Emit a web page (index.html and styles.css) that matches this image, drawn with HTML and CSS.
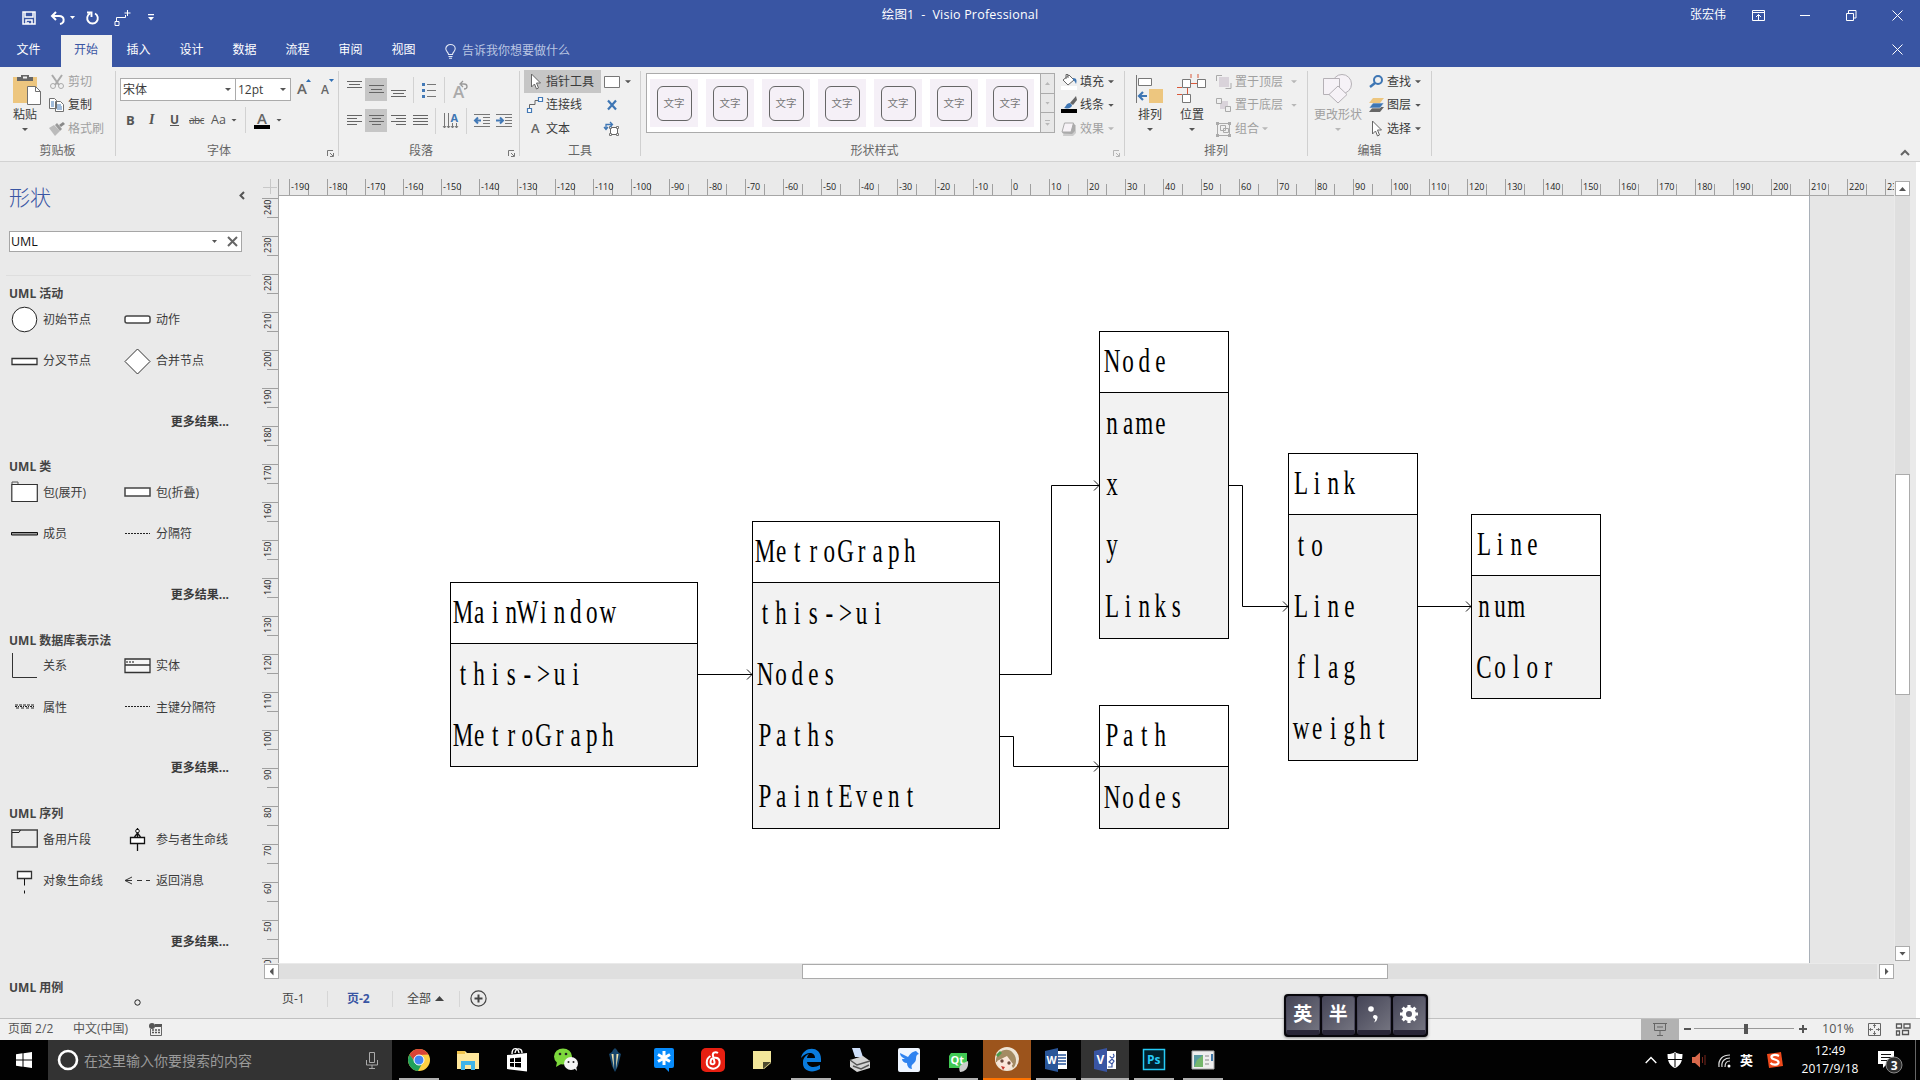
FILE: index.html
```html
<!DOCTYPE html>
<html lang="zh-CN">
<head>
<meta charset="utf-8">
<title>绘图1 - Visio Professional</title>
<link rel="stylesheet" href="styles.css">
</head>
<body>
<header class="titlebar">
  <div class="qat">
    <svg width="14" height="14" viewBox="0 0 14 14"><path d="M1 1h12v12H1zM3 1v5h8V1M4 13V9h6v4M6 11v2" fill="none" stroke="#fff" stroke-width="1.5"/></svg>
    <svg class="q-undo" width="16" height="14" viewBox="0 0 16 14"><path d="M6 1L2 5l4 4M2 5h7c6 0 6 7 1 8" fill="none" stroke="#fff" stroke-width="2"/></svg>
    <i class="caret white q-caret"></i>
    <svg class="q-redo" width="14" height="14" viewBox="0 0 14 14"><path d="M9 2.500A5.300 5.300 0 1 1 4 2.500M1 1.500h4.500V6" fill="none" stroke="#fff" stroke-width="1.900"/></svg>
    <svg class="q-conn" width="17" height="16" viewBox="0 0 17 16"><path d="M2.500 11V7.500H9.500M1 11.500h4v4H1zM13.500 0v6M10.500 3h6M11.500 5v2.500H8" fill="none" stroke="#fff"/></svg>
    <svg class="q-more" width="6" height="7" viewBox="0 0 6 7"><path d="M0 0h6v1.300H0zM0 3h6L3 6.500z" fill="#fff"/></svg>
  </div>
  <div class="doc-title">绘图1&nbsp; -&nbsp; Visio Professional</div>
  <div class="win">
    <span>张宏伟</span>
    <svg class="w-opt" width="13" height="11" viewBox="0 0 13 11"><path d="M.5.500h12v10H.5zM.5 2.500h12M6.500 10V4.500M4 7l2.500-2.500L9 7" fill="none" stroke="#fff"/></svg>
    <svg class="w-min" width="10" height="11" viewBox="0 0 10 11"><path d="M0 5.500h10" stroke="#fff"/></svg>
    <svg class="w-max" width="11" height="11" viewBox="0 0 11 11"><path d="M.5 3.500h7v7h-7zM2.500 3V.500h7.500v7.500H8" fill="none" stroke="#fff"/></svg>
    <svg class="w-x" width="11" height="11" viewBox="0 0 11 11"><path d="M.5.500l10 10M10.500.500l-10 10" stroke="#fff"/></svg>
  </div>
</header>
<nav class="tabs">
  <span class="file">文件</span><span class="active">开始</span><span>插入</span><span>设计</span><span>数据</span><span>流程</span><span>审阅</span><span>视图</span>
  <svg class="bulb" width="11" height="15" viewBox="0 0 11 15"><path d="M3.500 10.500C3.500 8 .8 7.500.8 4.800a4.700 4.300 0 0 1 9.400 0C10.200 7.500 7.500 8 7.500 10.500zM3.500 12.500h4M4 14.300h3" fill="none" stroke="#e4e9f5" stroke-width="1.100"/></svg>
  <em>告诉我你想要做什么</em>
  <svg class="tab-x" width="11" height="11" viewBox="0 0 11 11"><path d="M.5.500l10 10M10.500.500l-10 10" stroke="#fff"/></svg>
</nav>

<section class="ribbon">
  <div class="group g-clip">
    <div class="body">
      <div class="big paste">
        <svg width="30" height="32" viewBox="0 0 30 32"><path d="M1 3h24v26H1z" fill="#edc67f"/><path d="M5 3h4V1h8v2h4v4H5z" fill="#666"/><path d="M11 2.500h4v2h-4z" fill="#f0f0f0"/><path d="M15.500 12.500h8l5 5v13h-13z" fill="#fff" stroke="#707070"/><path d="M23.500 12.500v5h5" fill="none" stroke="#707070"/></svg>
        <span>粘贴</span><i class="caret"></i>
      </div>
      <div class="rows">
        <div class="row off"><svg width="16" height="16" viewBox="0 0 16 16"><path d="M3 1l7 10M13 1L6 11" stroke="#aaa" stroke-width="2"/><circle cx="4" cy="12" r="2.500" fill="none" stroke="#aaa"/><circle cx="12" cy="12" r="2.500" fill="none" stroke="#aaa"/></svg><span>剪切</span></div>
        <div class="row"><svg width="16" height="16" viewBox="0 0 16 16"><path d="M.5 1.500h5l2 2v8h-7zM6.500 4.500h5l3 3v7h-8z" fill="#fff" stroke="#707070"/><path d="M2 5h3M2 7h3M2 9h3M8 8h4M8 10h5M8 12h5" stroke="#4379b6"/></svg><span>复制</span></div>
        <div class="row off"><svg width="16" height="16" viewBox="0 0 16 16"><path d="M0 7l5-3 6 6-5 5z" fill="#bbb"/><path d="M6 4l2-2 5 6-2 2z" fill="#999"/><path d="M10 4l4-3 2 2-4 3z" fill="#888"/></svg><span>格式刷</span></div>
      </div>
    </div>
    <div class="caption"><span>剪贴板</span></div>
  </div>
  <i class="vsep"></i>
  <div class="group g-font">
    <div class="body col">
      <div class="line1">
        <div class="combo name"><span>宋体</span><i class="caret"></i></div><div class="combo size"><span>12pt</span><i class="caret"></i></div>
        <svg class="grow" width="14" height="18" viewBox="0 0 14 18"><path d="M9 3h5l-2.500-3z" fill="#2f6fb5"/><text x="0" y="15" class="ia" font-size="15">A</text></svg>
        <svg class="shrink" width="14" height="18" viewBox="0 0 14 18"><path d="M8 0h5l-2.500 3z" fill="#2f6fb5"/><text x="0" y="15" class="ia" font-size="12">A</text></svg>
      </div>
      <div class="line2">
        <b class="fb">B</b><b class="fi">I</b><b class="fu">U</b><s class="fs">abc</s><span class="fa">Aa</span><i class="caret"></i><i class="tiny-sep"></i>
        <svg class="fcolor" width="16" height="17" viewBox="0 0 16 17"><text x="3" y="12" class="ia" font-size="15">A</text><path d="M0 13h16v4H0z" fill="#000"/></svg><i class="caret"></i>
      </div>
    </div>
    <div class="caption launch"><span>字体</span><svg width="7" height="7" viewBox="0 0 7 7"><path d="M.5 6V.500H6M3 3l3 3M6.500 3v3.500H3" fill="none" stroke="#777"/></svg></div>
  </div>
  <i class="vsep"></i>
  <div class="group g-para">
    <div class="body col">
      <div class="pline">
        <span class="pb"><svg width="15" height="23" viewBox="0 0 15 23"><path d="M0 3.500h15M2 6.500h11M0 9.500h15" stroke="#666"/></svg></span>
        <span class="pb on"><svg width="15" height="23" viewBox="0 0 15 23"><path d="M0 7.500h15M2 11.500h11M0 14.500h15" stroke="#666"/></svg></span>
        <span class="pb"><svg width="15" height="23" viewBox="0 0 15 23"><path d="M0 12.500h15M2 15.500h11M0 18.500h15" stroke="#666"/></svg></span>
        <i class="tiny-sep m1"></i>
        <svg class="bul" width="16" height="16" viewBox="0 0 16 16"><path d="M5 2.500h9M5 8.500h9M5 14.500h9" stroke="#777"/><path d="M0 1h3v3H0zM0 7h3v3H0zM0 13h3v3H0z" fill="#4379b6"/></svg>
        <i class="tiny-sep m2"></i>
        <svg class="rot" width="16" height="18" viewBox="0 0 16 18"><text x="0" y="17" class="ia g" font-size="17">A</text><path d="M8 3h3c4 0 4 5 0 5M10 0L7 3l3 3" fill="none" stroke="#999" stroke-width="1.300"/></svg>
      </div>
      <div class="pline second">
        <span class="pb"><svg width="15" height="23" viewBox="0 0 15 23"><path d="M0 6.500h15M0 9.500h10M0 12.500h15M0 15.500h10" stroke="#666"/></svg></span>
        <span class="pb on"><svg width="15" height="23" viewBox="0 0 15 23"><path d="M0 6.500h15M3 9.500h9M0 12.500h15M3 15.500h9" stroke="#666"/></svg></span>
        <span class="pb"><svg width="15" height="23" viewBox="0 0 15 23"><path d="M0 6.500h15M5 9.500h10M0 12.500h15M5 15.500h10" stroke="#666"/></svg></span>
        <span class="pb"><svg width="15" height="23" viewBox="0 0 15 23"><path d="M0 6.500h15M0 9.500h15M0 12.500h15M0 15.500h15" stroke="#666"/></svg></span>
        <i class="tiny-sep"></i>
        <svg class="vert" width="17" height="16" viewBox="0 0 17 16"><path d="M1.500 0v15M5.500 0v15M9.500 10v5M13.500 10v5M0 13l1.500 2L3 13M4 13l1.500 2L7 13M8 13l1.500 2 1.500-2M12 13l1.500 2 1.500-2" fill="none" stroke="#777"/><text x="7.500" y="9" class="ia blue" font-size="11">A</text></svg>
        <i class="tiny-sep m3"></i>
        <svg class="ind" width="16" height="13" viewBox="0 0 16 13"><path d="M0 .5h16M9 3.500h7M9 6.500h7M9 9.500h7M0 12.500h16" stroke="#777"/><path d="M7 6.500H1M4 3.500l-3 3 3 3" fill="none" stroke="#4379b6" stroke-width="2"/></svg>
        <svg class="ind" width="16" height="13" viewBox="0 0 16 13"><path d="M0 .5h16M9 3.500h7M9 6.500h7M9 9.500h7M0 12.500h16" stroke="#777"/><path d="M0 6.500h6M4 3.500l3 3-3 3" fill="none" stroke="#4379b6" stroke-width="2"/></svg>
      </div>
    </div>
    <div class="caption launch"><span>段落</span><svg width="7" height="7" viewBox="0 0 7 7"><path d="M.5 6V.500H6M3 3l3 3M6.500 3v3.500H3" fill="none" stroke="#777"/></svg></div>
  </div>
  <i class="vsep"></i>
  <div class="group g-tools">
    <div class="body">
      <div class="rows tools">
        <div class="row sel"><svg width="16" height="18" viewBox="0 0 16 18"><path d="M4.500 1v13l3-3 2 5 2-1-2-5h4z" fill="#fff" stroke="#666"/></svg><span>指针工具</span></div>
        <div class="row"><svg width="16" height="18" viewBox="0 0 16 18"><path d="M2.500 12V8.500h5.500V4.500h3" fill="none" stroke="#666"/><path d="M.5 12.500h4v4h-4zM11.500 1.500h4v4h-4z" fill="#fff" stroke="#4379b6" stroke-width="1.200"/></svg><span>连接线</span></div>
        <div class="row"><svg width="16" height="18" viewBox="0 0 16 18"><text x="4" y="13" class="ia" font-size="13">A</text></svg><span>文本</span></div>
      </div>
      <div class="rows minis">
        <div class="row"><svg width="17" height="14" viewBox="0 0 17 14"><path d="M.5 1.500h15v11H.5z" fill="#fff" stroke="#777"/></svg><i class="caret"></i></div>
        <div class="row"><svg width="17" height="12" viewBox="0 0 17 12"><path d="M4 1.500l8 9M12 1.500l-8 9" stroke="#3e76b4" stroke-width="2.200"/></svg></div>
        <div class="row"><svg width="17" height="16" viewBox="0 0 17 16"><path d="M6.500 6.500h7v7h-7z" fill="#fff" stroke="#666"/><path d="M5.500 5.500h2v2h-2zM12.500 5.500h2v2h-2zM5.500 12.500h2v2h-2zM12.500 12.500h2v2h-2z" fill="#fff" stroke="#777"/><path d="M2 8V3.500h6M0 6l2 2.500L4 6M6 1l2.500 2.500L6 6" fill="none" stroke="#3e76b4" stroke-width="1.300"/></svg></div>
      </div>
    </div>
    <div class="caption"><span>工具</span></div>
  </div>
  <i class="vsep"></i>
  <div class="group g-style">
    <div class="body">
      <div class="gallery">
        <div class="cells"><span class="cell"><u>文字</u></span><span class="cell"><u>文字</u></span><span class="cell"><u>文字</u></span><span class="cell"><u>文字</u></span><span class="cell"><u>文字</u></span><span class="cell"><u>文字</u></span><span class="cell"><u>文字</u></span></div>
        <div class="gscroll"><span><i class="caret up pale"></i></span><span><i class="caret pale"></i></span><span class="more"><i class="caret pale"></i></span></div>
      </div>
      <div class="rows fills">
        <div class="row"><svg width="16" height="18" viewBox="0 0 16 18"><path d="M2 7l6-5 5 5-6 5z" fill="#fff" stroke="#666"/><path d="M5 6V1.500h2V5" fill="none" stroke="#666"/><path d="M12 5c4 0 4 3 3 6-1-2-1-3-3-4z" fill="#3e76b4"/><path d="M0 13h16v4H0z" fill="#fff"/></svg><span>填充</span><i class="caret"></i></div>
        <div class="row"><svg width="16" height="18" viewBox="0 0 16 18"><path d="M3 12c2-1 2-5 6-5l2 2c0 3-4 4-8 3z" fill="#3e76b4"/><path d="M9 7l6-7 1 4-4 5z" fill="#666"/><path d="M0 13h16v4H0z" fill="#000"/></svg><span>线条</span><i class="caret"></i></div>
        <div class="row off"><svg width="16" height="18" viewBox="0 0 16 18"><path d="M4 5h11v8l-3 3H2z" fill="#ccc"/><path d="M3.500 3h9L10 12H1z" fill="#f6f2f6" stroke="#aaa"/><path d="M12.500 3l1.500 2v6l-3 3-9-.500L1 12h9z" fill="#aaa"/></svg><span>效果</span><i class="caret pale"></i></div>
      </div>
    </div>
    <div class="caption launch"><span>形状样式</span><svg width="7" height="7" viewBox="0 0 7 7"><path d="M.5 6V.500H6M3 3l3 3M6.500 3v3.500H3" fill="none" stroke="#b5b5b5"/></svg></div>
  </div>
  <i class="vsep"></i>
  <div class="group g-arr">
    <div class="body">
      <div class="big b1">
        <svg width="30" height="31" viewBox="0 0 30 31"><path d="M1.500 1v28" stroke="#777"/><path d="M3.500 4.500h13v7h-13z" fill="#fff" stroke="#777"/><path d="M14 15h14v14H14z" fill="#edc67f"/><path d="M12 22H5M8 18l-4 4 4 4" fill="none" stroke="#3e76b4" stroke-width="2.200"/></svg>
        <span>排列</span><i class="caret"></i>
      </div>
      <div class="big b2">
        <svg width="30" height="31" viewBox="0 0 30 31"><path d="M14 0v4M21 0v4M14 9.500h8M10.500 14v7M0 13.500h5M0 20.500h5" stroke="#d9593b"/><path d="M5.500 5.500h8v8h-8zM20.500 5.500h8v8h-8zM5.500 20.500h8v8h-8z" fill="#fff" stroke="#777"/></svg>
        <span>位置</span><i class="caret"></i>
      </div>
      <div class="rows arr">
        <div class="row off"><svg width="16" height="16" viewBox="0 0 16 16"><path d="M3 3h10v10H3z" fill="#d9d3da"/><path d="M6 1.500H.5V7M15 9v5.500H9.500" fill="none" stroke="#aaa"/></svg><span>置于顶层</span><i class="caret pale"></i></div>
        <div class="row off"><svg width="16" height="16" viewBox="0 0 16 16"><path d="M4 4h8v8H4z" fill="#d9d3da"/><path d="M.5 1.500h5v5h-5zM9.500 9.500h5v5h-5z" fill="#f0f0f0" stroke="#aaa"/></svg><span>置于底层</span><i class="caret pale"></i></div>
        <div class="row off near"><svg width="16" height="16" viewBox="0 0 16 16"><path d="M1.500 2.500h12v12h-12zM4.500 4.500h5v5h-5zM7.500 7.500h5v4h-5z" fill="none" stroke="#aaa"/><path d="M0 1h3v3H0zM12 1h3v3h-3zM0 13h3v3H0zM12 13h3v3h-3z" fill="#aaa"/></svg><span>组合</span><i class="caret pale"></i></div>
      </div>
    </div>
    <div class="caption"><span>排列</span></div>
  </div>
  <i class="vsep"></i>
  <div class="group g-edit">
    <div class="body">
      <div class="big off change">
        <svg width="30" height="31" viewBox="0 0 30 31"><circle cx="19" cy="10" r="9.500" fill="#f6f2f7" stroke="#b5b1b6"/><path d="M.5 4.500h16v16H.500z" fill="#f6f2f7" stroke="#b5b1b6"/><path d="M15 12l9 8.500-9 8.500-9-8.500z" fill="#f6f2f7" stroke="#b5b1b6"/></svg>
        <span>更改形状</span><i class="caret pale"></i>
      </div>
      <div class="rows edit">
        <div class="row"><svg width="15" height="16" viewBox="0 0 15 16"><circle cx="9" cy="6" r="4" fill="none" stroke="#3e76b4" stroke-width="2"/><path d="M6 9l-5 4" stroke="#3e76b4" stroke-width="2.500"/></svg><span>查找</span><i class="caret"></i></div>
        <div class="row"><svg width="15" height="16" viewBox="0 0 15 16"><path d="M4 10h11l-4 5H0z" fill="#666"/><path d="M4 6h11l-4 5H0z" fill="#3e76b4" stroke="#f0f0f0" stroke-width=".6"/><path d="M4 1h11l-4 5H0z" fill="#edc67f"/></svg><span>图层</span><i class="caret"></i></div>
        <div class="row"><svg width="15" height="18" viewBox="0 0 15 18"><path d="M3.500 1v13l3-3 2 5 2-1-2-5h4z" fill="#fff" stroke="#666"/></svg><span>选择</span><i class="caret"></i></div>
      </div>
    </div>
    <div class="caption"><span>编辑</span></div>
  </div>
  <i class="vsep"></i>
  <svg class="collapse" width="10" height="7" viewBox="0 0 10 7"><path d="M1 6l4-4 4 4" fill="none" stroke="#666" stroke-width="2"/></svg>
</section>

<main class="work">
  <aside class="shapes">
    <div class="shapes-head"><h1>形状</h1><svg width="6" height="9" viewBox="0 0 6 9"><path d="M5 1L1.500 4.500 5 8" fill="none" stroke="#555" stroke-width="2"/></svg></div>
    <div class="search"><span>UML</span><i class="caret"></i><svg width="11" height="11" viewBox="0 0 11 11"><path d="M1 1l9 9M10 1l-9 9" stroke="#666" stroke-width="2"/></svg></div>
    <div class="stencils">
      <section class="stencil"><h2>UML 活动</h2>
        <div class="grid">
          <div><svg viewBox="0 0 27 27"><circle cx="13.500" cy="13.500" r="12.300" fill="#fff" stroke="#222"/></svg>初始节点</div>
          <div><svg viewBox="0 0 27 27"><rect x="1" y="10" width="25" height="7" rx="2" fill="#fff" stroke="#444" stroke-width="1.500"/></svg>动作</div>
          <div><svg viewBox="0 0 27 27"><path d="M1 10.500h25v6H1z" fill="#fff" stroke="#333" stroke-width="1.300"/></svg>分叉节点</div>
          <div><svg viewBox="0 0 27 27"><path d="M13.500 1L26 13.500 13.500 26 1 13.500z" fill="#fff" stroke="#333"/></svg>合并节点</div>
        </div><b>更多结果...</b></section>
      <section class="stencil"><h2>UML 类</h2>
        <div class="grid">
          <div><svg viewBox="0 0 27 27"><path d="M1 5.500V3h6v2.500" fill="none" stroke="#555"/><path d="M.8 5.500h25.500v17H.8z" fill="#fff" stroke="#333" stroke-width="1.200"/></svg>包(展开)</div>
          <div><svg viewBox="0 0 27 27"><path d="M1 9h25v8H1z" fill="#fff" stroke="#444" stroke-width="1.500"/></svg>包(折叠)</div>
          <div><svg viewBox="0 0 27 27"><path d="M.5 11.500h26v2.500H.5z" fill="#999" stroke="#111"/></svg>成员</div>
          <div><svg viewBox="0 0 27 27"><path d="M1 12.500h25" stroke="#222" stroke-dasharray="2 1"/></svg>分隔符</div>
        </div><b>更多结果...</b></section>
      <section class="stencil"><h2>UML 数据库表示法</h2>
        <div class="grid">
          <div><svg viewBox="0 0 27 27"><path d="M1.500 0v24.500H26" fill="none" stroke="#333"/></svg>关系</div>
          <div><svg viewBox="0 0 27 27"><path d="M1 6h25v13.500H1zM1 12h25" fill="#f6f6f6" stroke="#333" stroke-width="1.300"/><path d="M2 9h9" stroke="#111" stroke-dasharray="2 1"/></svg>实体</div>
          <div><svg viewBox="0 0 27 27"><path d="M4 11h19" stroke="#222" stroke-dasharray="3 1"/><path d="M4 12.500h19" stroke="#222" stroke-dasharray="2 1 1 1"/><path d="M5 14h18" stroke="#222" stroke-dasharray="3 2"/></svg>属性</div>
          <div><svg viewBox="0 0 27 27"><path d="M1 12.500h25" stroke="#222" stroke-dasharray="2 1"/></svg>主键分隔符</div>
        </div><b>更多结果...</b></section>
      <section class="stencil"><h2>UML 序列</h2>
        <div class="grid">
          <div><svg viewBox="0 0 27 27"><path d="M.8 4h25.500v17H.8z" fill="#ebebeb" stroke="#444" stroke-width="1.400"/><path d="M1 6.500h7l1.500-2.500" fill="none" stroke="#222"/></svg>备用片段</div>
          <div><svg viewBox="0 0 27 27"><circle cx="13.500" cy="5" r="1.800" fill="#fff" stroke="#111"/><path d="M13.500 2v2M13.500 7v5M10.500 11l3-4 3 4M13.500 18v7" fill="none" stroke="#111" stroke-width="1.300"/><path d="M6.500 11.500h14v6h-14z" fill="#fff" stroke="#111" stroke-width="1.300"/></svg>参与者生命线</div>
          <div><svg viewBox="0 0 27 27"><path d="M6.500 3.500h14v7h-14z" fill="#fff" stroke="#333" stroke-width="1.300"/><path d="M13.500 11v6.500M13.500 22.500v3" stroke="#111"/></svg>对象生命线</div>
          <div><svg viewBox="0 0 27 27"><path d="M8 9l-7 3.500L8 16M1 12.500h7M13 12.500h5M22 12.500h4" fill="none" stroke="#333"/></svg>返回消息</div>
        </div><b>更多结果...</b></section>
      <section class="stencil last"><h2>UML 用例</h2><svg width="7" height="7" viewBox="0 0 7 7"><circle cx="3.500" cy="3.500" r="2.700" fill="none" stroke="#222"/></svg></section>
    </div>
  </aside>

  <div class="editor">
    <div class="corner"></div>
    <div class="hruler" id="hruler"></div>
    <div class="vruler" id="vruler"></div>
    <div class="canvas">
      <div class="offpage"></div>
      <div class="cls mainwindow"><h3><svg><text>MainWindow</text></svg></h3><p><svg><text>this-&gt;ui</text></svg></p><p><svg><text>MetroGraph</text></svg></p></div>
      <div class="cls metrograph"><h3><svg><text>MetroGraph</text></svg></h3><p><svg><text>this-&gt;ui</text></svg></p><p><svg><text>Nodes</text></svg></p><p><svg><text>Paths</text></svg></p><p><svg><text>PaintEvent</text></svg></p></div>
      <div class="cls node"><h3><svg><text>Node</text></svg></h3><p><svg><text>name</text></svg></p><p><svg><text>x</text></svg></p><p><svg><text>y</text></svg></p><p><svg><text>Links</text></svg></p></div>
      <div class="cls link"><h3><svg><text>Link</text></svg></h3><p><svg><text>to</text></svg></p><p><svg><text>Line</text></svg></p><p><svg><text>flag</text></svg></p><p><svg><text>weight</text></svg></p></div>
      <div class="cls lineb"><h3><svg><text>Line</text></svg></h3><p><svg><text>num</text></svg></p><p><svg><text>Color</text></svg></p></div>
      <div class="cls path"><h3><svg><text>Path</text></svg></h3><p><svg><text>Nodes</text></svg></p></div>
      <svg class="wires" width="1615" height="767" viewBox="279 196 1615 767"><g fill="none" stroke="#000"><path d="M698 674.500h55M1000 674.500h51.500v-189h48M1000 736.500h13.500v30h86M1229 485.500h13.500v121h46M1418 606.500h54"/><path stroke-width=".9" d="M747 669.500l5 5-5 5M1094 480.500l5 5-5 5M1094 761.500l5 5-5 5M1283 601.500l5 5-5 5M1466 601.500l5 5-5 5"/></g></svg>
    </div>
    <div class="vscroll"><span class="sb"><i class="caret up"></i></span><div class="vtrack"><div class="vthumb"></div></div><span class="sb"><i class="caret"></i></span></div>
    <div class="hscroll"><span class="sb"><i class="tri left"></i></span><div class="htrack"><div class="hthumb"></div></div><span class="sb"><i class="tri right"></i></span></div>
    <div class="pages"><span class="p1">页-1</span><i></i><b class="p2">页-2</b><i></i><span class="p3">全部</span><em></em><i></i>
      <svg width="17" height="17" viewBox="0 0 17 17"><circle cx="8.500" cy="8.500" r="7.600" fill="none" stroke="#444" stroke-width="1.200"/><path d="M8.500 4.500v8M4.500 8.500h8" stroke="#444" stroke-width="2"/></svg></div>
  </div>
  <div class="edge"></div>
</main>

<footer class="status">
  <span class="s1">页面 2/2</span><span class="s2">中文(中国)</span>
  <svg class="rec" width="14" height="13" viewBox="0 0 14 13"><path d="M6 1h7v3H6z" fill="#555"/><circle cx="3" cy="3" r="3" fill="#555"/><path d="M1.500 6v6.500h11V3" fill="none" stroke="#666"/><path d="M3 7h8M3 9.500h8" stroke="#555" stroke-dasharray="2 1" stroke-width="1.500"/></svg>
  <div class="present"><svg width="14" height="13" viewBox="0 0 14 13"><path d="M0 .5h14M1.500 1v6.500h11V1M4 4h6M7 8v4M4 12.500h6" fill="none" stroke="#666"/></svg></div>
  <svg class="zoombar" width="123" height="12" viewBox="0 0 123 12"><path d="M0 6h7M115 6h8M119 2v8" stroke="#555" stroke-width="2"/><path d="M10 5.500h100" stroke="#999"/><path d="M60 1h4v10h-4z" fill="#555"/></svg>
  <span class="pct">101%</span>
  <svg class="fit" width="13" height="13" viewBox="0 0 13 13"><path d="M.5.500h12v12H.5z" fill="none" stroke="#666"/><path d="M6.500 1v4M6.500 8v4M1 6.500h4M8 6.500h4M5 2.500h3M5 10.500h3M2.500 5v3M10.500 5v3" stroke="#666" stroke-width=".9"/></svg>
  <svg class="multi" width="15" height="13" viewBox="0 0 15 13"><path d="M.5 1h5v4h-5zM8 1h6v4H8zM.5 8h3v4h-3zM6.500 7.500h6v4h-6z" fill="none" stroke="#555" stroke-width="1.300"/></svg>
</footer>

<footer class="taskbar">
  <div class="start"><svg width="16" height="16" viewBox="0 0 16 16"><path d="M0 2.300L6.500 1.300V7.500H0zM7.500 1.200L16 0v7.500H7.500zM0 8.500h6.500v6.200L0 13.700zM7.500 8.500H16V16l-8.500-1.200z" fill="#fff"/></svg></div>
  <div class="cortana"><svg width="22" height="22" viewBox="0 0 22 22"><circle cx="11" cy="11" r="9" fill="none" stroke="#fff" stroke-width="2.600"/></svg><span>在这里输入你要搜索的内容</span><svg class="mic" width="12" height="17" viewBox="0 0 12 17"><path d="M3.500.500h5v10h-5zM.5 8v5h11V8M6 13v3.500M3 16.500h6" fill="none" stroke="#aaa"/></svg></div>
  <div class="apps">
    <span class="run"><svg viewBox="0 0 24 24"><circle cx="12" cy="12" r="11" fill="#fdd043"/><path d="M2.500 6.500A11 11 0 0 1 21.500 6.500L12 7 8 14z" fill="#db4437"/><path d="M2.500 6.500A11 11 0 0 0 11 23l5-9H8z" fill="#20a15c"/><circle cx="12" cy="12" r="5" fill="#4285f4" stroke="#fff"/></svg></span>
    <span><svg viewBox="0 0 24 24"><path d="M1 3h8l2 2h12v16H1z" fill="#fee79b"/><path d="M1 3h8v3H1z" fill="#f1c44c"/><path d="M5 22V13h14v9h-4v-5H9v5z" fill="#3fb4e8"/></svg></span>
    <span><svg viewBox="0 0 24 24"><path d="M2 7l20-2v18.500L2 21z" fill="#fff"/><path d="M7 6C7-1 13-1 14 5M10 5c1-6 7-5 7 0" fill="none" stroke="#fff" stroke-width="1.400"/><path d="M5 10.500l4-.5v4H5zM10 10l6-.6V14h-6zM5 15h4v4l-4-.5zM10 15h6v4.600l-6-.6z" fill="#000"/></svg></span>
    <span><svg viewBox="0 0 24 24"><ellipse cx="9" cy="8.500" rx="9" ry="8" fill="#7dd83c"/><path d="M3 14l-1 5 5-3z" fill="#7dd83c"/><ellipse cx="17" cy="15.500" rx="7" ry="6.500" fill="#f4f4f4"/><path d="M20 20l3 3-1-5z" fill="#f4f4f4"/><g fill="#222"><circle cx="6" cy="6" r="1.300"/><circle cx="12" cy="6" r="1.300"/><circle cx="14.500" cy="14" r="1"/><circle cx="19.500" cy="14" r="1"/></g></svg></span>
    <span><svg viewBox="0 0 24 24"><path d="M10 2l2-2 2 2 1 2 3 2-3 12-3 6-3-6L6 6l3-2z" fill="#16456b"/><path d="M8.500 6h2l.5 15zM13.500 6h2L13 21z" fill="#f3e4b0"/></svg></span>
    <span><svg viewBox="0 0 24 24"><path d="M4 0h16q2 0 2 2v16q0 2-2 2h-3v4l-4-4H4q-2 0-2-2V2q0-2 2-2z" fill="#078bfb"/><path d="M12 3v14M6 6.500l12 7M18 6.500l-12 7" stroke="#fff" stroke-width="3"/></svg></span>
    <span><svg viewBox="0 0 24 24"><rect width="24" height="24" rx="5" fill="#e71f11"/><path d="M17 5c-3-2-6 0-5 3l1.500 6c.5 3-4 3-4 0 0-5 8-6 9-1 1 6-5 9-9 7-5-2-5-9 0-12" fill="none" stroke="#fff" stroke-width="2"/></svg></span>
    <span><svg viewBox="0 0 24 24"><path d="M3 3h18v12l-7 6H3z" fill="#f2e69a"/><path d="M21 14l-8 7v-7z" fill="#4d4a30"/></svg></span>
    <span class="run"><svg viewBox="0 0 24 24"><path d="M2 10C4-2 22-3 22 11v3H8c1 6 8 6 13 3v4c-8 5-18 2-17-7 0-4 3-7 6-8-2 2-2 4-2 4h8c0-6-8-7-14 0z" fill="#0a7bdc"/></svg></span>
    <span><svg viewBox="0 0 24 24"><path d="M4 0h8l3 9H7z" fill="#cfe0fa"/><path d="M2 12l13-4 7 5v7l-13 4-7-5z" fill="#d4d4d4"/><path d="M2 12l7 5 13-4M5 18l8 3 8-4" fill="none" stroke="#555" stroke-width="1.500"/></svg></span>
    <span><svg viewBox="0 0 24 24"><rect x="1" width="22" height="24" rx="2" fill="#eef5ff"/><path d="M3 5l8 4c2-4 6-6 8-6l3 3c-5 1-1 6-5 9-2 2-3 2-2 6-3 0-5-3-5-6-3 0-5-2-5-4h3c-3-2-5-3-5-6z" fill="#2f83f0"/></svg></span>
    <span class="run"><svg viewBox="0 0 24 24"><path d="M5 5h16v15H3V8z" fill="#41c954"/><text x="4.500" y="16" font-size="11" class="it">Qt</text><path d="M22 13c-8 3-10 6-8 11 5 0 9-4 8-11z" fill="#ccc"/></svg></span>
    <span class="alert"><svg viewBox="0 0 24 24"><circle cx="12" cy="12" r="12" fill="#eee4d5"/><path d="M1 15C0 4 13-1 18 6c5 5 3 13 0 15L12 10l-7 5z" fill="#a48b63"/><path d="M2 14l10-5 6 8-5 6c-6 0-10-4-11-9z" fill="#fbe7da"/><circle cx="7" cy="14" r="1.700" fill="#6e4a3c"/><circle cx="14" cy="16" r="1.700" fill="#6e4a3c"/><path d="M6 19l4 1-2 3z" fill="#c5372f"/><path d="M1 8l4-4 2 2-4 4z" fill="#4b9a4b"/></svg></span>
    <span class="run"><svg viewBox="0 0 24 24"><path d="M12 3h11v18H12z" fill="#fff"/><path d="M14 7h8M14 10h8M14 13h8M14 16h8" stroke="#2a5699" stroke-width="1.300"/><path d="M1 3l13-3v24L1 21z" fill="#2a5699"/><text x="2.500" y="16" font-size="10.500" class="it">W</text></svg></span>
    <span class="run cur"><svg viewBox="0 0 24 24"><path d="M12 3h11v18H12z" fill="#fff"/><path d="M16 14l3-3 2 2-2 3zM17 8a2 2 0 1 0 3-2M15 19h4v-3" fill="none" stroke="#3955a3" stroke-width="1.200"/><path d="M1 3l13-3v24L1 21z" fill="#3955a3"/><text x="3.500" y="16" font-size="12" class="it">V</text></svg></span>
    <span class="run"><svg viewBox="0 0 24 24"><path d="M1.500 1.500h21v20h-21z" fill="#00202c" stroke="#26c9f5" stroke-width="1.500"/><text x="5" y="16" font-size="12" class="it ps">Ps</text></svg></span>
    <span class="run"><svg viewBox="0 0 24 24"><path d="M1 3h22v18H1z" fill="#eee" stroke="#aaa"/><path d="M3 7h9v12H3z" fill="#5898a1"/><path d="M6 12l6-5v12H3z" fill="#75b66b"/><path d="M14 8h4M14 12h4M14 16h4" stroke="#bbb" stroke-width="2"/><path d="M20 6h2v7h-2z" fill="#4077a8"/></svg></span>
  </div>
  <div class="tray">
    <svg class="t-up" width="12" height="8" viewBox="0 0 12 8"><path d="M.7 7L6 1.500 11.300 7" fill="none" stroke="#fff" stroke-width="1.400"/></svg>
    <svg class="t-sh" width="16" height="16" viewBox="0 0 16 16"><path d="M8 0c2 1.500 4 2 7.500 2C15.500 10 13 14 8 16 3 14 .5 10 .5 2 4 2 6 1.500 8 0z" fill="#fff"/><path d="M8 1v14M1 7.500h14" stroke="#000"/></svg>
    <svg class="t-sp" width="15" height="16" viewBox="0 0 15 16"><path d="M0 5h3l5-4.500v15L3 11H0z" fill="#d9694c"/><path d="M10.500 5v6M13 3v10" stroke="#79271c"/></svg>
    <svg class="t-wf" width="14" height="15" viewBox="0 0 14 15"><path d="M2 14C1 6 6 2 13 2M5 14C4 8 8 5 13 5M8 14c0-4 2-6 5-6" fill="none" stroke="#ddd" stroke-width="1.200"/><circle cx="12" cy="13" r="1.500" fill="#fff"/></svg>
    <b>英</b>
    <svg class="t-so" width="16" height="16" viewBox="0 0 16 16"><path d="M0 2l14-2 2 14-14 2z" fill="#f04a1c"/><path d="M12 4C8 2 4 3 4.500 5.500S11 7 11.500 10 6 13.500 3.500 11" fill="none" stroke="#fff" stroke-width="2.200"/></svg>
    <div class="clock"><span>12:49</span><span>2017/9/18</span></div>
    <svg class="t-nt" width="25" height="26" viewBox="0 0 25 26"><path d="M0 3h16v13h-7l-4 4v-4H0z" fill="#fff"/><path d="M3 6.500h10M3 9.500h10M3 12.500h7" stroke="#111"/><circle cx="16" cy="17" r="8" fill="#2e2e2e" stroke="#888"/><text x="12.800" y="21.500" font-size="12" class="it">3</text></svg>
    <i class="desk"></i>
  </div>
</footer>

<div class="ime"><span>英</span><span>半</span><span><svg width="14" height="22" viewBox="0 0 14 22"><circle cx="4" cy="6" r="2.800" fill="#fff"/><path d="M6 13.500a2.300 2.300 0 1 1 4.300 2c-.3 2-1.500 3-3.300 4 1-1.500 1.300-2.500 1-3.500-1 0-2-1-2-2.500z" fill="#fff"/></svg></span><span><svg width="18" height="18" viewBox="0 0 18 18"><circle cx="9" cy="9" r="5" fill="none" stroke="#fff" stroke-width="4"/><path d="M9 0v3M9 15v3M0 9h3M15 9h3M2.600 2.600l2.200 2.200M13.200 13.200l2.200 2.200M15.400 2.600l-2.200 2.200M2.600 15.400l2.200-2.200" stroke="#fff" stroke-width="3.200"/></svg></span></div>
<script src="script.js"></script>
</body>
</html>
```
FILE: styles.css
```css
* { box-sizing: border-box; }
body {
  margin: 0; width: 1920px; height: 1080px; overflow: hidden;
  display: flex; flex-direction: column;
  font: 12px/16px "Open Sans", "Noto Sans CJK SC", sans-serif;
  color: #3b3b3b; background: #eaeaea;
}
svg { display: block; flex: none; overflow: visible; }
i { font-style: normal; flex: none; }
h1, h2, h3, p { margin: 0; font-weight: 400; }
.ia { font-family: "Open Sans", sans-serif; font-weight: 600; fill: #666; }
.ia.g { fill: #aaa; }
.ia.blue { fill: #3e76b4; font-weight: 700; }
.it { font-family: "Open Sans", sans-serif; font-weight: 700; fill: #fff; }
.it.ps { fill: #26c9f5; }

.caret { width: 7px; height: 4px; background: #555; clip-path: polygon(0 0, 100% 0, 50% 100%); }
.row .caret, .line1 .caret, .line2 .caret { width: 6px; height: 3px; }
.caret.white { background: #fff; width: 5px; height: 3px; }
.caret.up { transform: rotate(180deg); }
.caret.pale { background: #b8b8b8; }

.titlebar { height: 31px; flex: none; background: #3955a3; color: #fff; display: grid; grid-template-columns: 1fr auto 1fr; align-items: center; }
.qat { display: flex; align-items: center; padding: 4px 0 0 22px; }
.q-undo { margin-left: 14px; }
.q-caret { margin-left: 4px; }
.q-redo { margin-left: 11px; }
.q-conn { margin-left: 14px; }
.q-more { margin-left: 17px; }
.doc-title { font-size: 12.5px; letter-spacing: .2px; padding-bottom: 2px; }
.win { display: flex; align-items: center; justify-content: flex-end; padding: 0 17px 1px 0; }
.w-opt { margin-left: 26px; }
.w-min { margin-left: 35px; }
.w-max { margin-left: 36px; }
.w-x { margin-left: 35px; }

.tabs { height: 36px; flex: none; background: #3955a3; color: #fff; display: flex; align-items: center; padding: 4px 17px 0 3px; }
.tabs > span { width: 53px; height: 32px; line-height: 30px; text-align: center; flex: none; }
.tabs .file { width: 51px; margin-right: 7px; }
.tabs .active { width: 51px; background: #f0f0f0; color: #3955a3; padding-right: 1px; }
.bulb { margin-left: 15px; }
.tabs em { font-style: normal; color: #b9c5e2; margin-left: 6px; margin-right: auto; }
.tab-x { margin-bottom: 3px; }

.ribbon { height: 95px; flex: none; background: #f0f0f0; border-bottom: 1px solid #d2d2d2; display: flex; }
.vsep { width: 1px; height: 85px; margin-top: 4px; background: #d0d0d0; }
.group { display: flex; flex-direction: column; flex: none; }
.body { height: 75px; padding-top: 3px; display: flex; }
.body.col { flex-direction: column; }
.caption { height: 18px; display: flex; align-items: center; color: #666; }
.caption span { flex: 1; text-align: center; }
.caption.launch { padding-right: 4px; }
.caption.launch svg { margin: 4px 0 0 5px; }
.g-clip { width: 115px; } .g-font { width: 222px; } .g-para { width: 180px; } .g-tools { width: 120px; }
.g-style { width: 483px; } .g-arr { width: 182px; } .g-edit { width: 123px; }
.rows { display: flex; flex-direction: column; }
.row { height: 23.5px; display: flex; align-items: center; white-space: nowrap; }
.row span { margin-left: 3px; }
.off { color: #a0a0a0; }
.big { display: flex; flex-direction: column; align-items: center; padding-top: 4px; }
.big span { margin-top: 2px; white-space: nowrap; }
.big .caret { margin-top: 5px; width: 6px; height: 3px; }
.paste { width: 26px; margin: 0 11px 0 12px; }
.paste svg { margin-left: 3px; }
.paste span { margin-top: 1px; }

.line1 { display: flex; padding: 8px 0 0 4px; height: 33px; }
.combo { height: 23px; background: #fff; border: 1px solid #ababab; display: flex; align-items: center; justify-content: space-between; padding: 0 4px 0 2px; }
.combo.name { width: 116px; }
.combo.size { width: 56px; margin-left: -1px; }
.grow { margin: 1px 0 0 6px; } .shrink { margin: 1px 0 0 10px; }
.line2 { display: flex; align-items: center; height: 34px; color: #555; }
.fb { font-size: 13px; width: 9px; margin-left: 10px; }
.fi { font: italic 700 14px/18px "Liberation Serif", serif; margin-left: 14px; width: 9px; }
.fu { font-size: 12px; text-decoration: underline; margin-left: 12px; width: 10px; }
.fs { font-size: 10px; margin-left: 9px; width: 18px; letter-spacing: -.5px; }
.fa { font-size: 12.5px; margin: 0 4px 0 4px; width: 16px; }
.tiny-sep { width: 1px; height: 26px; background: #d2d2d2; }
.line2 .tiny-sep { margin: 0 8px; }
.fcolor { margin-right: 6px; }

.pline { display: flex; height: 23px; margin: 8px 0 0 4px; align-items: center; }
.pb { width: 22px; height: 23px; display: flex; justify-content: center; align-items: center; }
.pb.on { background: #c6c6c6; }
.m1 { margin-left: 4px; } .m2 { margin: 0 8px 0 6px; } .bul { margin-left: 8px; }
.pline.second .tiny-sep { margin-left: 4px; }
.vert { margin: 0 3px 0 7px; }
.pline.second .m3 { margin: 0 7px 0 3px; }
.ind + .ind { margin-left: 6px; }

.tools { margin-left: 4px; width: 77px; }
.tools .row { padding-left: 3px; }
.tools .sel { background: #c6c6c6; height: 23px; margin-bottom: .5px; }
.minis { margin-left: 3px; }
.minis .caret { margin-left: 5px; }

.gallery { width: 409px; height: 60px; margin: 3px 6px 0 5px; border: 1px solid #ababab; background: #fff; display: flex; justify-content: space-between; }
.cells { display: flex; gap: 8px; padding: 5px 0 0 3px; }
.cell { width: 48px; height: 48px; background: #f5f0f7; display: flex; align-items: center; justify-content: center; }
.cell u { width: 35px; height: 35px; border: 1px solid #666; border-radius: 6px; text-decoration: none; font-size: 10.5px; line-height: 32px; text-align: center; color: #777; }
.gscroll { width: 14px; background: #e8e8e8; border-left: 1px solid #ababab; display: flex; flex-direction: column; }
.gscroll span { flex: 1; display: flex; flex-direction: column; align-items: center; justify-content: center; border-bottom: 1px solid #ababab; }
.gscroll span:last-child { border-bottom: 0; }
.gscroll .caret { width: 5px; height: 3px; }
.more::before { content: ""; width: 5px; height: 1px; background: #b8b8b8; margin-bottom: 2px; }
.row .caret { margin-left: 4px; }
.b1 { width: 30px; margin-left: 10px; }
.b2 { width: 30px; margin: 0 9px 0 12px; }
.arr .row .caret { margin-left: 8px; }
.arr .near .caret { margin-left: 3px; }
.change { width: 48px; margin: 0 7px 0 6px; }
.collapse { margin: 82px 10px 0 auto; }

.work { height: 856px; flex: none; display: flex; }
.shapes { width: 262px; flex: none; overflow: hidden; }
.shapes-head { display: flex; align-items: center; justify-content: space-between; padding: 21px 17px 0 9px; height: 49px; }
.shapes-head svg { margin-bottom: 4px; }
h1 { font-size: 21px; line-height: 28px; color: #3955a3; font-weight: 300; }
.search { width: 233px; height: 21px; margin: 20px 0 0 9px; border: 1px solid #a6a6a6; background: #fff; color: #111; display: flex; align-items: center; padding: 0 3px 0 1px; font-size: 12.5px; }
.search .caret { margin: 0 10px 0 auto; width: 5px; height: 3px; }
.stencils { margin: 23px 11px 0 6px; border-top: 1px solid #dedede; padding: 9px 0 0 3px; }
.stencil { height: 173.4px; }
h2 { font-size: 12px; line-height: 17px; font-weight: 700; color: #444; }
.grid { display: grid; grid-template-columns: 113px 120px; grid-auto-rows: 27px; row-gap: 14.5px; padding: 4px 0 0 2px; }
.grid div { display: flex; align-items: center; gap: 5px; white-space: nowrap; }
.grid svg { width: 27px; height: 27px; }
.stencil b { display: block; text-align: right; padding-right: 22px; margin-top: 39px; }
.last svg { margin: 3px 0 0 125px; }

.editor { width: 1654px; flex: none; display: grid; padding-top: 17px; grid-template-columns: 17px 1615px 22px; grid-template-rows: 17px 767px 16px 39px; }
.corner { background: linear-gradient(#c8c8c8, #c8c8c8) 8px 0 / 1px 15px no-repeat, linear-gradient(#c8c8c8, #c8c8c8) 1px 8px / 14px 1px no-repeat; border-right: 1px solid #a6a6a6; }
.hruler { border-bottom: 1px solid #a6a6a6; display: flex; padding-left: 10px; overflow: hidden; }
.hruler span { width: 38px; flex: none; height: 16px; padding: 1px 0 0 1px; font-size: 9px; line-height: 13px; color: #222; border-left: 1px solid #a0a0a0; background: linear-gradient(#a0a0a0, #a0a0a0) 18px 5px / 1px 11px no-repeat; }
.vruler { border-right: 1px solid #a6a6a6; display: flex; flex-direction: column; padding-top: 2px; overflow: hidden; }
.vruler span { height: 38px; flex: none; width: 16px; border-top: 1px solid #a0a0a0; background: linear-gradient(#a0a0a0, #a0a0a0) 5px 18px / 11px 1px no-repeat; }
.vruler b { display: block; font-weight: 400; font-size: 9px; line-height: 12px; color: #222; writing-mode: vertical-rl; transform: rotate(180deg); width: 12px; height: 17px; padding-bottom: 1px; text-align: right; }
.canvas { position: relative; background: #fff; overflow: hidden; }
.offpage { width: 85px; height: 767px; margin-left: auto; background: #e6e6e6; border-left: 1px solid #a9b0b8; }
.cls { position: absolute; border: 1px solid #000; background: #f2f2f2; display: flex; flex-direction: column; color: #000; }
.cls h3 { height: 61px; flex: none; background: #fff; border-bottom: 1px solid #000; }
.cls p { flex: 1; }
.cls h3, .cls p { display: flex; align-items: center; padding: 0 0 0 4px; }
.cls svg { width: 120px; height: 40px; }
.cls text { font: 33px "Liberation Serif", serif; text-anchor: middle; transform: translateY(30px) scaleX(.7); }
.mainwindow { left: 171px; top: 386px; width: 248px; height: 185px; }
.metrograph { left: 473px; top: 325px; width: 248px; height: 308px; }
.node { left: 820px; top: 135px; width: 130px; height: 308px; }
.link { left: 1009px; top: 257px; width: 130px; height: 308px; }
.lineb { left: 1192px; top: 318px; width: 130px; height: 185px; }
.path { left: 820px; top: 509px; width: 130px; height: 124px; }
.wires { position: absolute; left: 0; top: 0; }
.vscroll { grid-column: 3; grid-row: 1 / 3; margin: 2px 0 2px 1px; width: 15px; display: flex; flex-direction: column; }
.sb { width: 15px; height: 15px; flex: none; background: #fff; border: 1px solid #ababab; display: flex; align-items: center; justify-content: center; }
.vtrack { flex: 1; background: #dfdfdf; padding-top: 278px; }
.vthumb { height: 221px; background: #fff; border: 1px solid #ababab; }
.hscroll { grid-column: 1 / 3; padding: 1px 0 0 2px; display: flex; }
.hscroll .htrack { flex: 1; background: #dfdfdf; margin-right: 2px; height: 15px; padding-left: 523px; }
.hthumb { width: 586px; height: 15px; background: #fff; border: 1px solid #ababab; }
.tri { width: 4px; height: 8px; background: #555; }
.tri.left { clip-path: polygon(100% 0, 100% 100%, 0 50%); }
.tri.right { clip-path: polygon(0 0, 0 100%, 100% 50%); }
.pages { grid-column: 1 / 4; display: flex; align-items: center; padding-left: 20px; color: #444; }
.pages i { width: 1px; height: 16px; background: #d6d6d6; }
.p1 { width: 45px; } .p2 { width: 45px; margin-left: 19px; color: #3955a3; } .p3 { margin-left: 14px; width: 28px; }
.pages em { width: 9px; height: 5px; background: #444; clip-path: polygon(50% 0, 100% 100%, 0 100%); margin-right: 15px; }
.pages svg { margin-left: 10px; }
.edge { flex: 1; background: #fff; }

.status { height: 22px; flex: none; background: #f0f0f0; border-top: 1px solid #c0c0c0; display: flex; align-items: center; color: #555; padding: 0 9px 1px 0; }
.s1 { margin-left: 8px; width: 65px; }
.s2 { width: 76px; }
.present { width: 38px; height: 21px; margin-bottom: -1px; background: #b2b2b2; display: flex; align-items: center; justify-content: center; margin-left: auto; }
.zoombar { margin-left: 5px; }
.pct { margin-left: 15px; width: 46px; font-size: 12.5px; }
.multi { margin-left: 15px; }

.taskbar { height: 40px; flex: none; background: #020202; color: #fff; display: flex; }
.start { width: 48px; display: flex; align-items: center; justify-content: center; }
.cortana { width: 344px; background: #333; display: flex; align-items: center; padding: 0 14px 0 9px; color: #9a9a9a; font-size: 14px; }
.cortana span { margin: 2px auto 0 5px; }
.apps { display: flex; gap: 1px; margin-left: 3px; }
.apps span { width: 48px; display: flex; align-items: center; justify-content: center; }
.apps svg { width: 24px; height: 24px; }
.apps .run { background: linear-gradient(#b0b0b0, #b0b0b0) 4px 38px / 40px 2px no-repeat; }
.apps .cur { background: linear-gradient(#b0b0b0, #b0b0b0) 0 38px / 48px 2px no-repeat #333; }
.apps .alert { background: #9c541c; border-bottom: 2px solid #ff7300; }
.tray { margin-left: auto; display: flex; align-items: center; }
.t-sh { margin-left: 10px; } .t-sp { margin-left: 9px; } .t-wf { margin-left: 10px; }
.tray b { font-size: 13px; margin-left: 9px; }
.t-so { margin-left: 14px; }
.clock { display: flex; flex-direction: column; align-items: center; width: 60px; margin-left: 17px; line-height: 18.5px; }
.t-nt { margin: 1px 0 0 18px; }
.desk { width: 1px; height: 40px; background: #666; margin: 0 4px 0 12px; }

.ime { position: absolute; left: 1284px; top: 994px; width: 144px; height: 43px; background: #08070c; border-radius: 4px; display: flex; gap: 2px; padding: 2px; box-shadow: 0 1px 3px #888; }
.ime span { flex: 1; border: 1px solid #49475a; border-bottom: 5px solid #292638; border-radius: 3px; background: linear-gradient(135deg, #454557, #73737f); color: #fff; font-size: 19px; font-weight: 700; display: flex; align-items: center; justify-content: center; }
```
FILE: script.js
```js
function fillRuler(id, from, to, step, wrap) {
  const ruler = document.getElementById(id);
  for (let v = from; step > 0 ? v <= to : v >= to; v += step) {
    const mark = document.createElement('span');
    const label = wrap ? mark.appendChild(document.createElement('b')) : mark;
    label.textContent = v;
    ruler.appendChild(mark);
  }
}
fillRuler('hruler', -190, 230, 10, false);
fillRuler('vruler', 240, 40, -10, true);

// Class labels sit on a fixed 16px pitch; x is in the narrowed coordinate space.
document.querySelectorAll('.cls text').forEach((label) => {
  const centres = [...label.textContent].map((_, i) => ((i * 16.1 + 8) / 0.7).toFixed(1));
  label.setAttribute('x', centres.join(' '));
});
```
